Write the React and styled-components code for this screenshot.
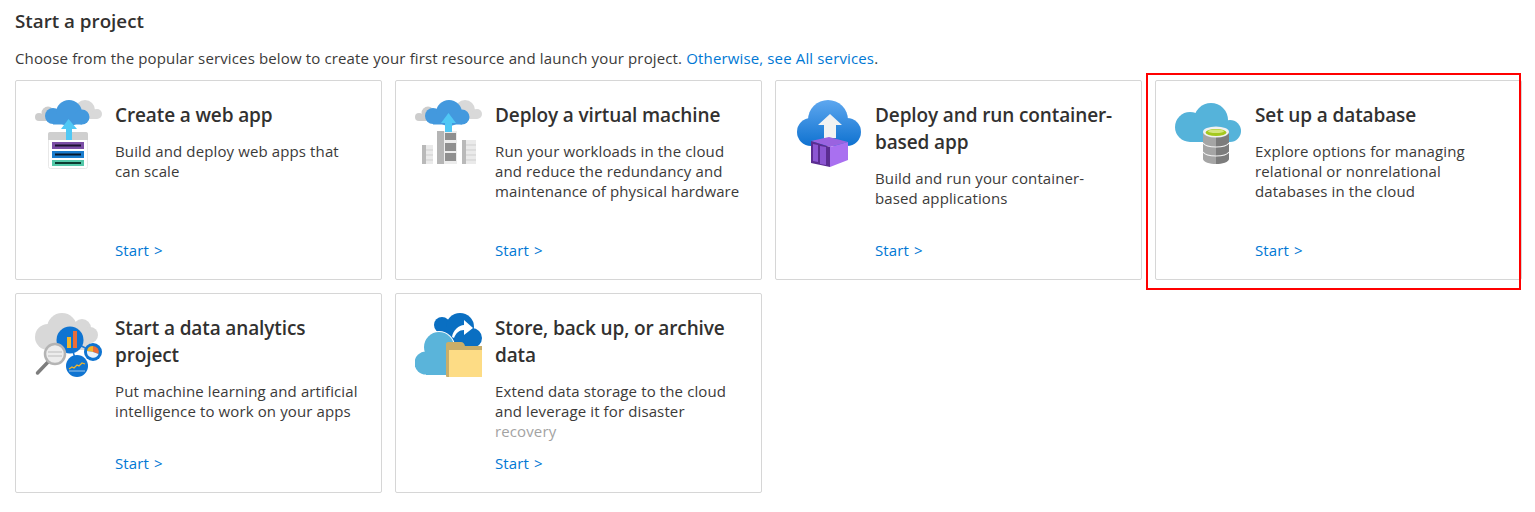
import React from 'react';
import styled, { createGlobalStyle } from 'styled-components';

const GlobalStyle = createGlobalStyle`
  html, body {
    margin: 0;
    padding: 0;
    background: #fff;
    font-family: 'Open Sans', 'Noto Sans', sans-serif;
    color: #323130;
  }
`;

const CloudPair = () => (
  <>
    <circle cx="4" cy="17" r="4" fill="#cdcdcd" />
    <circle cx="13" cy="13" r="6.5" fill="#cdcdcd" />
    <rect x="4" y="16" width="12" height="5" fill="#cdcdcd" />
    <circle cx="50" cy="10" r="10" fill="#d9d9d9" />
    <circle cx="62" cy="14" r="5" fill="#d9d9d9" />
    <rect x="50" y="14" width="12" height="5" fill="#d9d9d9" />
    <circle cx="18" cy="16" r="8" fill="#4399de" />
    <circle cx="34" cy="13" r="13" fill="#4399de" />
    <circle cx="47" cy="17" r="7.5" fill="#4399de" />
    <rect x="18" y="14" width="29" height="10.5" fill="#4399de" />
  </>
);

const WebAppIcon = () => (
  <svg width="70" height="70" viewBox="0 0 70 70">
    <CloudPair />
    <rect x="13.5" y="32.5" width="39" height="36" rx="2" fill="#fff" stroke="#e8e8e8" />
    <path d="M13 34a2 2 0 0 1 2-2h36a2 2 0 0 1 2 2v6H13z" fill="#cfcfcf" />
    <path d="M33.5 19L26 29h5v11h6V29h5z" fill="#50c8f5" />
    <rect x="17" y="42" width="32" height="7" fill="#7b4ea6" />
    <rect x="20" y="44.5" width="26" height="2" fill="#1c1230" />
    <rect x="17" y="51" width="32" height="7" fill="#1a7ccd" />
    <rect x="20" y="53.5" width="26" height="2" fill="#07182c" />
    <rect x="17" y="60" width="32" height="6" fill="#53c7a8" />
    <rect x="20" y="62" width="26" height="2" fill="#0c3a30" />
  </svg>
);

const VmIcon = () => (
  <svg width="70" height="70" viewBox="0 0 70 70">
    <CloudPair />
    <rect x="22" y="31" width="7" height="33" fill="#b5b5b5" />
    <rect x="29" y="31" width="13" height="33" fill="#ececec" />
    <rect x="30" y="33" width="11" height="7" fill="#8f8f8f" />
    <rect x="30" y="43" width="11" height="8" fill="#8f8f8f" />
    <rect x="30" y="53" width="11" height="8" fill="#8f8f8f" />
    <rect x="7" y="45" width="4" height="19" fill="#b9b9b9" />
    <rect x="11" y="45" width="7" height="19" fill="#eaeaea" />
    <path d="M11 50h7M11 55h7M11 60h7" stroke="#cfcfcf" />
    <rect x="47" y="40" width="4" height="24" fill="#b9b9b9" />
    <rect x="51" y="40" width="10" height="24" fill="#eaeaea" />
    <path d="M51 45h10M51 50h10M51 55h10M51 60h10" stroke="#cfcfcf" />
    <path d="M33.5 13L26 23h4v9h7v-9h4z" fill="#50c8f5" />
  </svg>
);

const ContainerIcon = () => (
  <svg width="70" height="70" viewBox="0 0 70 70">
    <defs>
      <linearGradient id="cloudBlue" gradientUnits="userSpaceOnUse" x1="0" y1="0" x2="0" y2="46">
        <stop offset="0" stopColor="#5ea7ef" />
        <stop offset="1" stopColor="#0f72d0" />
      </linearGradient>
    </defs>
    <g fill="url(#cloudBlue)">
      <circle cx="33" cy="20" r="20" />
      <circle cx="16" cy="32" r="14" />
      <circle cx="52" cy="32" r="14" />
      <rect x="16" y="26" width="36" height="20" />
    </g>
    <path d="M35 14L23 25h6v13h12V25h6z" fill="#f2f2f2" />
    <path d="M16 41l18-4 19 5-18 5z" fill="#9a63e0" />
    <path d="M35 47l18-5v18l-18 7z" fill="#a970f0" />
    <path d="M16 41l19 6v20l-19-4z" fill="#5b2d91" />
    <path d="M18 44l5 1v17l-5-1zM25 46l6 1v18l-6-1z" fill="#8c56d3" />
  </svg>
);

const DatabaseIcon = () => (
  <svg width="70" height="70" viewBox="0 0 70 70">
    <circle cx="15" cy="27" r="15" fill="#55b3da" />
    <circle cx="36" cy="20" r="17" fill="#55b3da" />
    <circle cx="55" cy="31" r="11" fill="#55b3da" />
    <rect x="15" y="26" width="40" height="16" fill="#55b3da" />
    <path d="M28 32v27c0 3 7 5 13 5V32z" fill="#a5a5a5" />
    <path d="M54 32v27c0 3-7 5-13 5V32z" fill="#7c7c7c" />
    <ellipse cx="41" cy="32" rx="13" ry="5.5" fill="#f1f1f1" />
    <ellipse cx="41" cy="32.5" rx="10.5" ry="3.5" fill="#a4c81e" />
    <ellipse cx="41" cy="31.3" rx="8" ry="1.8" fill="#d5e67e" />
    <path d="M28 43c2 3 8 4 13 4s11-1 13-4M28 52c2 3 8 4 13 4s11-1 13-4" fill="none" stroke="#f4f4f4" strokeWidth="1.2" />
  </svg>
);

const AnalyticsIcon = () => (
  <svg width="70" height="70" viewBox="0 0 70 70">
    <circle cx="13" cy="24" r="13" fill="#d8d8d8" />
    <circle cx="27" cy="15" r="15" fill="#d8d8d8" />
    <circle cx="47" cy="15" r="9" fill="#d8d8d8" />
    <circle cx="55" cy="22" r="8" fill="#d8d8d8" />
    <rect x="13" y="18" width="42" height="19" fill="#d8d8d8" />
    <path d="M35 27L58 39M35 27L42 53" stroke="#1e78d2" strokeWidth="1.5" />
    <circle cx="35" cy="27" r="13.5" fill="#0f74d1" />
    <rect x="32" y="24" width="4" height="11" fill="#f2b52a" />
    <rect x="38" y="18" width="4" height="17" fill="#ea6d3a" />
    <circle cx="58" cy="39" r="9" fill="#0f74d1" />
    <path d="M58 39v-6a6 6 0 0 1 5.5 8z" fill="#ea6d3a" />
    <path d="M58 39l-6-1a6 6 0 0 1 6-5z" fill="#f2b52a" />
    <path d="M52 38a6 6 0 0 0 11.5 3L58 39z" fill="#e9f1f9" />
    <circle cx="42" cy="53" r="11" fill="#0f74d1" />
    <path d="M34 56l3-2 2 1 3-3 2 1 3-3 3 1" fill="none" stroke="#f2b52a" strokeWidth="1.3" />
    <path d="M34 58h16" stroke="#9bc6ec" />
    <path d="M2.5 60L13 49" stroke="#7d7d7d" strokeWidth="3.5" strokeLinecap="round" />
    <circle cx="20" cy="41" r="10" fill="#ececec" stroke="#b4b4b4" strokeWidth="2.5" />
    <path d="M13 39h14M13 43h14" stroke="#cccccc" strokeWidth="1.5" />
  </svg>
);

const StorageIcon = () => (
  <svg width="70" height="70" viewBox="0 0 70 70">
    <circle cx="27" cy="12" r="8" fill="#0a6fc2" />
    <circle cx="45" cy="14" r="14" fill="#0a6fc2" />
    <circle cx="57" cy="25" r="10" fill="#0a6fc2" />
    <rect x="22" y="14" width="35" height="21" fill="#0a6fc2" />
    <path d="M37 24c1-7 7-12 12-12V7l9 8-9 7v-5c-5 0-8 3-10 8z" fill="#fff" />
    <circle cx="24" cy="34" r="16" fill="#fff" />
    <circle cx="24" cy="34" r="15" fill="#5ab4da" />
    <circle cx="11" cy="50" r="11.5" fill="#5ab4da" />
    <circle cx="42" cy="48" r="13.5" fill="#5ab4da" />
    <rect x="11" y="38" width="30" height="24" fill="#5ab4da" />
    <path d="M31 31c0-1 1-2 2-2h13c2 0 3 1 4 4h17v4H31z" fill="#c9ae69" />
    <rect x="31" y="36" width="4" height="28" rx="1" fill="#c9ae69" />
    <rect x="34" y="37" width="33" height="27" fill="#fddc85" />
  </svg>
);

const cards = [
  {
    icon: <WebAppIcon />,
    title: ['Create a web app'],
    text: ['Build and deploy web apps that', 'can scale'],
  },
  {
    icon: <VmIcon />,
    title: ['Deploy a virtual machine'],
    text: ['Run your workloads in the cloud', 'and reduce the redundancy and', 'maintenance of physical hardware'],
  },
  {
    icon: <ContainerIcon />,
    title: ['Deploy and run container-', 'based app'],
    text: ['Build and run your container-', 'based applications'],
  },
  {
    icon: <DatabaseIcon />,
    title: ['Set up a database'],
    text: ['Explore options for managing', 'relational or nonrelational', 'databases in the cloud'],
    marked: true,
  },
  {
    icon: <AnalyticsIcon />,
    title: ['Start a data analytics', 'project'],
    text: ['Put machine learning and artificial', 'intelligence to work on your apps'],
  },
  {
    icon: <StorageIcon />,
    title: ['Store, back up, or archive', 'data'],
    text: ['Extend data storage to the cloud', 'and leverage it for disaster', 'recovery'],
    fadeLast: true,
  },
];

export default function App() {
  return (
    <Page>
      <GlobalStyle />
      <Heading>Start a project</Heading>
      <Intro>
        Choose from the popular services below to create your first resource and launch your project.{' '}
        <TextLink href="#">Otherwise, see All services</TextLink>.
      </Intro>
      <CardGrid>
        {cards.map((card) => (
          <Card key={card.title[0]}>
            <IconSlot>{card.icon}</IconSlot>
            <CardBody>
              <CardTitle>
                {card.title.map((line) => (
                  <Line key={line}>{line}</Line>
                ))}
              </CardTitle>
              <CardText>
                {card.text.map((line, i) => (
                  <Line key={line} $faded={card.fadeLast && i === card.text.length - 1}>
                    {line}
                  </Line>
                ))}
              </CardText>
              <StartLink href="#">Start &gt;</StartLink>
            </CardBody>
            {card.marked && <RedMark />}
          </Card>
        ))}
      </CardGrid>
    </Page>
  );
}

const Page = styled.div`
  width: 1535px;
  height: 512px;
  padding: 9px 0 0 15px;
  box-sizing: border-box;
  overflow: hidden;
`;

const Heading = styled.h2`
  margin: 0;
  font-size: 18.8px;
  line-height: 24px;
  font-weight: 600;
  color: #323130;
`;

const Intro = styled.p`
  margin: 15px 0 0;
  font-size: 15px;
  line-height: 20px;
  letter-spacing: 0.14px;
  color: #3b3a39;
`;

const TextLink = styled.a`
  color: #0078d4;
  text-decoration: none;
`;

const CardGrid = styled.div`
  display: grid;
  grid-template-columns: repeat(4, 367px);
  grid-auto-rows: 200px;
  gap: 13px;
  margin-top: 12px;
`;

const Card = styled.div`
  position: relative;
  display: flex;
  box-sizing: border-box;
  padding: 19px 0 0 15px;
  border: 1px solid #d6d6d6;
  border-radius: 2px;
  background: #fff;
`;

const IconSlot = styled.div`
  flex: 0 0 70px;
  height: 80px;
  margin-left: 4px;
`;

const CardBody = styled.div`
  display: flex;
  flex-direction: column;
  box-sizing: border-box;
  margin-left: 10px;
  padding-top: 2px;
  height: 160px;
`;

const CardTitle = styled.div`
  font-size: 19px;
  line-height: 27px;
  font-weight: 600;
  letter-spacing: -0.12px;
  color: #323130;
`;

const CardText = styled.div`
  margin-top: 12px;
  font-size: 15px;
  line-height: 20px;
  letter-spacing: 0.12px;
  color: #3b3a39;
`;

const Line = styled.div`
  white-space: nowrap;
  color: ${(props) => (props.$faded ? '#a3a3a3' : 'inherit')};
`;

const StartLink = styled.a`
  margin-top: auto;
  font-size: 15px;
  line-height: 20px;
  letter-spacing: 0.1px;
  word-spacing: 1px;
  color: #0078d4;
  text-decoration: none;
`;

const RedMark = styled.div`
  position: absolute;
  left: -10px;
  top: -8px;
  width: 371px;
  height: 213px;
  border: 2px solid #ff0000;
  pointer-events: none;
`;
